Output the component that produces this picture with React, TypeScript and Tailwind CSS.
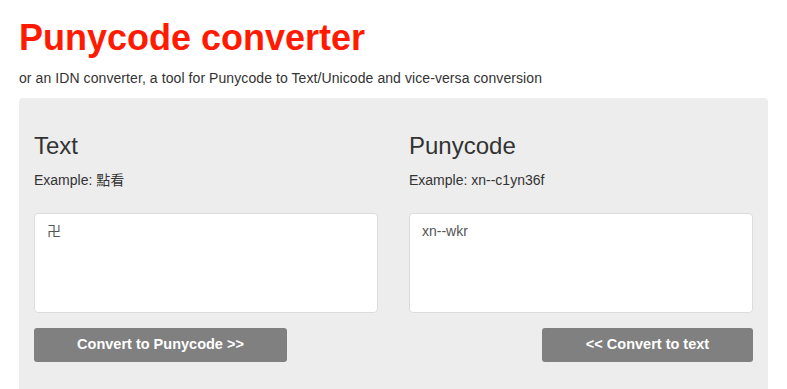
export default function App() {
  return (
    <div className="w-[787px] h-[389px] overflow-hidden bg-white px-[19px] pt-[14px]" style={{ fontFamily: '"Liberation Sans", Arial, sans-serif' }}>
      <h1 className="text-[36px] font-bold leading-[48px] text-[#ff1a00]">Punycode converter</h1>
      <p className="mt-[6px] text-[14px] leading-[20px] tracking-[0.08px] text-[#333]">
        or an IDN converter, a tool for Punycode to Text/Unicode and vice-versa conversion
      </p>

      <div className="mt-[10px] rounded-t-[4px] bg-[#ededed] px-[15px] pt-[35px] pb-[30px]">
        <div className="grid grid-cols-2 gap-[31px]">
          <div className="flex flex-col">
            <h2 className="text-[24px] leading-[26px] text-[#333]">Text</h2>
            <p className="mt-[11px] text-[14px] leading-[20px] text-[#333]" style={{ fontFamily: '"Liberation Sans", Arial, "Noto Sans CJK TC", sans-serif' }}>
              Example: 點看
            </p>
            <div className="mt-[23px] h-[100px] rounded-[4px] border border-[#dcdcdc] bg-white px-[12px] py-[8px] text-[14px] leading-[18px] text-[#555]" style={{ fontFamily: '"Liberation Sans", Arial, "Noto Sans CJK TC", sans-serif' }}>
              卍
            </div>
            <div className="mt-[15px] flex">
              <button className="h-[34px] w-[253px] rounded-[3px] bg-[#808080] text-[14.5px] font-bold text-white">
                Convert to Punycode &gt;&gt;
              </button>
            </div>
          </div>

          <div className="flex flex-col">
            <h2 className="text-[24px] leading-[26px] text-[#333]">Punycode</h2>
            <p className="mt-[11px] text-[14px] leading-[20px] text-[#333]">Example: xn--c1yn36f</p>
            <div className="mt-[23px] h-[100px] rounded-[4px] border border-[#dcdcdc] bg-white px-[12px] py-[8px] text-[14px] leading-[18px] text-[#555]">
              xn--wkr
            </div>
            <div className="mt-[15px] flex justify-end">
              <button className="h-[34px] w-[211px] rounded-[3px] bg-[#808080] text-[14.5px] font-bold text-white">
                &lt;&lt; Convert to text
              </button>
            </div>
          </div>
        </div>
      </div>
    </div>
  )
}
